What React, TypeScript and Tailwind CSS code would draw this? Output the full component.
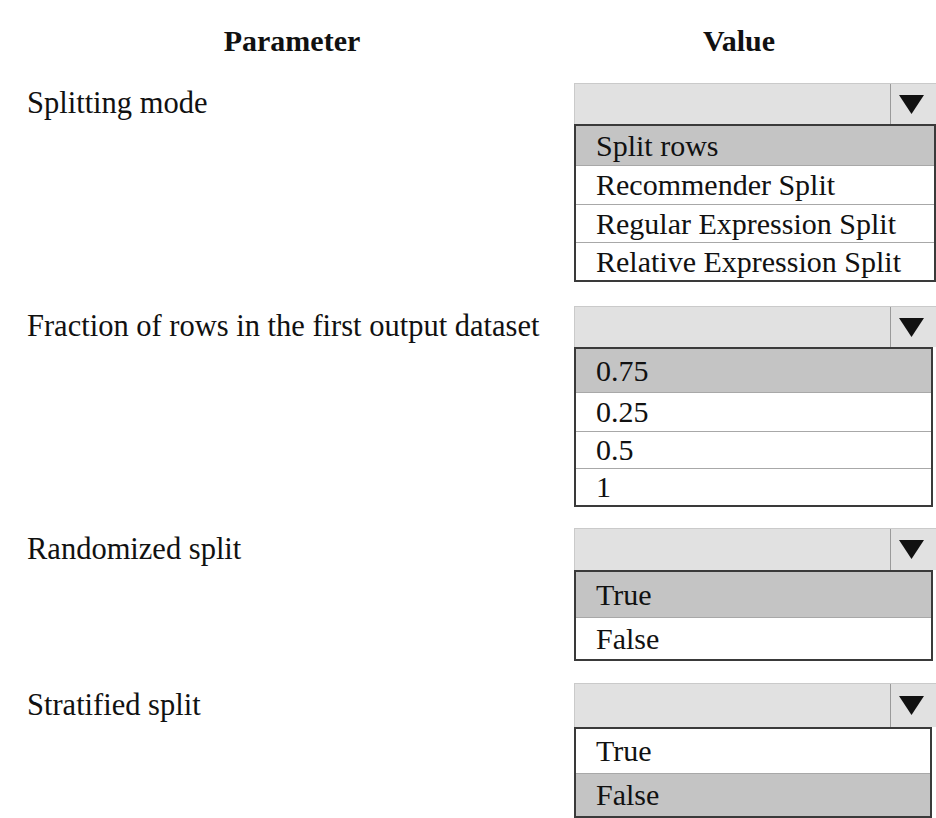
import React from 'react';

interface Field {
  label: string;
  options: string[];
  selected: number;
  listWidth: string;
  rowHeights: string[];
}

const FIELDS: Field[] = [
  {
    label: 'Splitting mode',
    options: ['Split rows', 'Recommender Split', 'Regular Expression Split', 'Relative Expression Split'],
    selected: 0,
    listWidth: 'w-[362px]',
    rowHeights: ['h-[39px]', 'h-[39px]', 'h-[38px]', 'h-[38px]'],
  },
  {
    label: 'Fraction of rows in the first output dataset',
    options: ['0.75', '0.25', '0.5', '1'],
    selected: 0,
    listWidth: 'w-[359px]',
    rowHeights: ['h-[43px]', 'h-[39px]', 'h-[37px]', 'h-[37px]'],
  },
  {
    label: 'Randomized split',
    options: ['True', 'False'],
    selected: 0,
    listWidth: 'w-[359px]',
    rowHeights: ['h-[45px]', 'h-[42px]'],
  },
  {
    label: 'Stratified split',
    options: ['True', 'False'],
    selected: 1,
    listWidth: 'w-[358px]',
    rowHeights: ['h-[44px]', 'h-[43px]'],
  },
];

const GAPS = ['mt-0', 'mt-[24px]', 'mt-[21px]', 'mt-[22px]'];
const HEADER_H = ['h-[41px]', 'h-[41px]', 'h-[42px]', 'h-[44px]'];

function Arrow() {
  return (
    <svg width="27" height="21" viewBox="0 0 27 21">
      <polygon points="1,1 26,1 13.5,20" fill="#111" />
    </svg>
  );
}

function Section({ field, index }: { field: Field; index: number }) {
  return (
    <div className={`flex ${GAPS[index]}`}>
      <div className={`w-[574px] shrink-0 pl-[27px] ${HEADER_H[index]} flex items-center text-[30.5px] leading-none`}>
        {field.label}
      </div>
      <div className="flex flex-col">
        <div className={`${HEADER_H[index]} w-[362px] flex bg-[#e1e1e1] border-t border-l border-[#cacaca]`}>
          <div className="flex-1" />
          <div className="w-[46px] border-l border-[#9a9a9a] flex items-center justify-center pr-[4px]">
            <Arrow />
          </div>
        </div>
        <div className={`${field.listWidth} border-2 border-[#3a3a3a] bg-white`}>
          {field.options.map((opt, i) => (
            <div
              key={opt}
              className={`${field.rowHeights[i]} flex items-center pl-[20px] text-[30px] leading-none ${
                i === field.selected ? 'bg-[#c4c4c4]' : 'bg-white'
              } ${i > 0 ? 'border-t border-[#a8a8a8]' : ''}`}
            >
              {opt}
            </div>
          ))}
        </div>
      </div>
    </div>
  );
}

export default function App() {
  return (
    <div
      className="w-[936px] h-[818px] overflow-hidden bg-white text-[#111] font-['Liberation_Serif',serif]"
    >
      <div className="flex h-[83px] pt-[26px] text-[30px] font-bold leading-none">
        <div className="w-[584px] text-center">Parameter</div>
        <div className="w-[310px] text-center">Value</div>
      </div>
      {FIELDS.map((f, i) => (
        <Section key={f.label} field={f} index={i} />
      ))}
    </div>
  );
}
